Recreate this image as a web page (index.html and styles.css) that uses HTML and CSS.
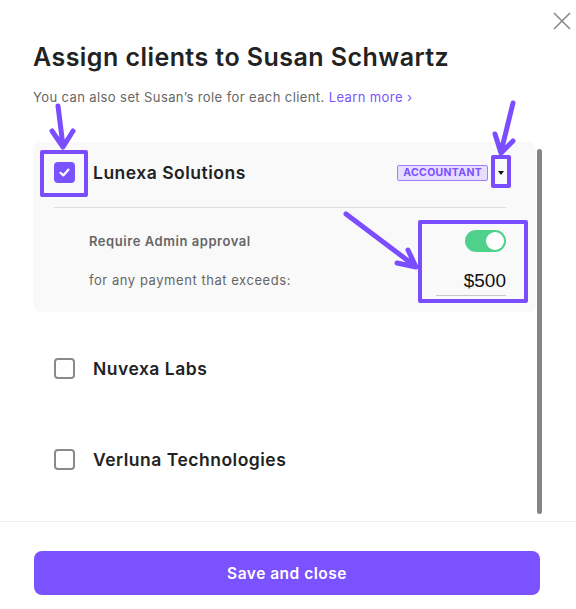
FILE: index.html
```html
<!DOCTYPE html>
<html>
<head>
  <meta charset="UTF-8">
  <title>Assign clients</title>
  <link rel="stylesheet" href="styles.css">
</head>
<body>
  <div class="dialog">

    <button class="close" aria-label="Close">
      <svg width="18" height="18" viewBox="0 0 18 18">
        <path d="M1 1 L17 17 M17 1 L1 17" stroke="#8a8a8a" stroke-width="1.6" fill="none"/>
      </svg>
    </button>

    <h1 class="title">Assign clients to Susan Schwartz</h1>
    <p class="subtitle">
      You can also set Susan’s role for each client. <a href="#">Learn more ›</a>
    </p>

    <div class="scroller">
      <div class="list">

        <div class="client client-open">
          <div class="client-head">
            <span class="check checked">
              <svg width="13" height="13" viewBox="0 0 13 13">
                <path d="M2.5 6.8 L5.3 9.4 L10.5 3.6" stroke="#fff" stroke-width="2.2" fill="none" stroke-linecap="round" stroke-linejoin="round"/>
              </svg>
            </span>
            <span class="client-name">Lunexa Solutions</span>
            <span class="badge">ACCOUNTANT</span>
            <span class="caret"></span>
          </div>
          <div class="rule"></div>
          <div class="approval">
            <span class="approval-title">Require Admin approval</span>
            <span class="toggle on"><span class="knob"></span></span>
            <span class="approval-text">for any payment that exceeds:</span>
            <span class="amount">$500</span>
          </div>
        </div>

        <div class="client">
          <div class="client-head">
            <span class="check"></span>
            <span class="client-name">Nuvexa Labs</span>
          </div>
        </div>

        <div class="client">
          <div class="client-head">
            <span class="check"></span>
            <span class="client-name">Verluna Technologies</span>
          </div>
        </div>

      </div>
      <div class="scrollbar"><div class="thumb"></div></div>
    </div>

    <div class="footer">
      <button class="save">Save and close</button>
    </div>
  </div>

  <!-- annotation marks drawn over the screenshot -->
  <svg class="marks" width="576" height="609" viewBox="0 0 576 609">
    <g stroke="#7a4dff" fill="none" stroke-linecap="round" stroke-linejoin="round">
      <rect x="42" y="152" width="44" height="43" stroke-width="4" stroke-linecap="butt"/>
      <rect x="493" y="157" width="16" height="29" stroke-width="4" stroke-linecap="butt"/>
      <rect x="420" y="222" width="106" height="79" stroke-width="4" stroke-linecap="butt"/>

      <path d="M58 106 L63 146 M52 131 L63 147 L73 131" stroke-width="5"/>
      <path d="M513 103 L501 152 M495 134 L501 153 L513 141" stroke-width="5"/>
      <path d="M346 214 L415 266 M408 250 L416 267 L397 263" stroke-width="5"/>
    </g>
  </svg>
</body>
</html>
```

FILE: styles.css
```css
body {
  margin: 0;
  background: #fff;
  font-family: Inter, "Noto Sans", sans-serif;
  color: #222;
}

.dialog {
  position: relative;
  width: 576px;
  height: 609px;
  box-sizing: border-box;
  display: flex;
  flex-direction: column;
}

.close {
  position: absolute; /* sits in the corner over the header */
  top: 12px;
  right: 5px;
  border: 0;
  background: none;
  padding: 0;
  width: 18px;
  height: 18px;
}

.title {
  margin: 42px 0 0 33px;
  font-size: 25px;
  line-height: 30px;
  font-weight: 600;
  color: #222;
  letter-spacing: 0.45px;
}

.subtitle {
  margin: 16px 0 0 33px;
  font-size: 13px;
  line-height: 18px;
  color: #666;
  letter-spacing: 0.4px;
}
.subtitle a {
  color: #7b52ff;
  text-decoration: none;
}

.scroller {
  margin-top: 36px;
  height: 379px;
  display: flex;
  padding-left: 33px;
  border-bottom: 1px solid #ececec;
  overflow: hidden;
}

.list {
  width: 503px;
  display: flex;
  flex-direction: column;
  gap: 23px;
}

.client {
  padding: 23px 30px 24px 21px;
  border-radius: 8px;
}
.client-open {
  background: #f9f9f9;
  padding: 20px 30px 16px 21px;
}

.client-head {
  display: flex;
  align-items: center;
  height: 21px;
}

.check {
  width: 21px;
  height: 21px;
  box-sizing: border-box;
  border: 2px solid #8a8a8a;
  border-radius: 4px;
  display: flex;
  align-items: center;
  justify-content: center;
  flex: none;
}
.check.checked {
  background: #7b52ff;
  border-color: #7b52ff;
}

.client-name {
  margin-left: 18px;
  font-size: 17.5px;
  font-weight: 600;
  color: #222;
  letter-spacing: 0.5px;
  flex: 1;
}

.badge {
  font-size: 10.5px;
  font-weight: 700;
  letter-spacing: 0.3px;
  color: #7b52ff;
  background: #e7ddff;
  border: 1px solid #9d7eff;
  border-radius: 2px;
  padding: 1px 5px;
  line-height: 12px;
}

.caret {
  margin-left: 10px;
  margin-right: 2px;
  width: 0;
  height: 0;
  border-left: 3.5px solid transparent;
  border-right: 3.5px solid transparent;
  border-top: 4px solid #111;
}

.rule {
  height: 1px;
  background: #dcdcdc;
  margin-top: 24px;
}

.approval {
  margin-top: 22px;
  padding-left: 35px;
  display: grid;
  grid-template-columns: 1fr auto;
  align-items: center;
  row-gap: 15px;
  font-size: 13px;
  letter-spacing: 0.55px;
  color: #666;
}
.approval-title {
  font-weight: 600;
}

.toggle {
  justify-self: end;
  width: 41px;
  height: 22px;
  border-radius: 11px;
  background: #4fd18b;
  display: flex;
  align-items: center;
  justify-content: flex-end;
  padding: 0 2px;
  box-sizing: border-box;
}
.knob {
  width: 18px;
  height: 18px;
  border-radius: 50%;
  background: #fff;
}

.approval-text {
  margin-top: -4px;
}

.amount {
  width: 70px;
  height: 28px;
  line-height: 28px;
  text-align: right;
  border-bottom: 1px solid #c8c8c8;
  font-family: "Liberation Sans", Arial, sans-serif;
  font-size: 19px;
  letter-spacing: 0;
  color: #111;
}

.scrollbar {
  width: 5px;
  margin-left: 1px;
  padding-top: 7px;
}
.thumb {
  height: 365px;
  border-radius: 3px;
  background: #858585;
}

.footer {
  padding: 29px 36px 0 34px;
}

.save {
  width: 100%;
  height: 44px;
  border: 0;
  border-radius: 8px;
  background: #7b52ff;
  color: #fff;
  font-family: Inter, "Noto Sans", sans-serif;
  font-size: 15.5px;
  font-weight: 600;
  letter-spacing: 0.5px;
}

.marks {
  position: absolute; /* annotation layer over the page */
  top: 0;
  left: 0;
  pointer-events: none;
}
```
